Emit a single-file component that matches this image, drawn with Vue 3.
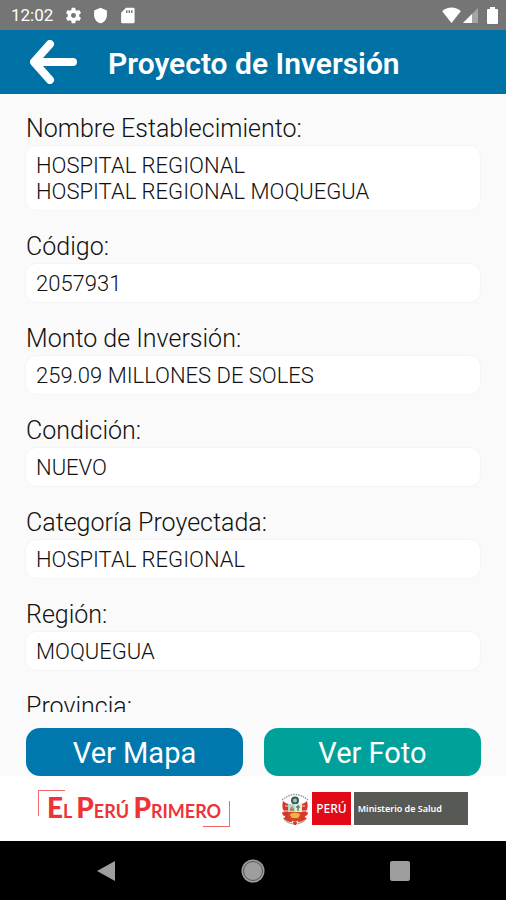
<template>
    <div class="screen">
        <div class="status-bar">
            <span class="clock">12:02</span>
            <svg class="status-icon" viewBox="0 0 24 24" aria-hidden="true">
                <path fill-rule="evenodd" d="M9.500 1h5l.6 3.200 1.900 1.100 3.100-1.100 2.500 4.300-2.500 2.200v2.600l2.500 2.200-2.500 4.300-3.100-1.100-1.900 1.100-.6 3.200h-5l-.6-3.200L7 18.700l-3.100 1.100-2.500-4.300 2.500-2.200v-2.600L1.400 8.500l2.500-4.300L7 5.300l1.900-1.100zM12 15.500a3.500 3.500 0 1 0 0-7 3.500 3.500 0 0 0 0 7z" />
            </svg>
            <svg class="status-icon" viewBox="0 0 24 24" aria-hidden="true">
                <path d="M12 1 3 5v6.500c0 5.500 3.800 10.300 9 11.500 5.200-1.200 9-6 9-11.500V5z" />
            </svg>
            <svg class="status-icon" viewBox="0 0 24 24" aria-hidden="true">
                <path fill-rule="evenodd" d="M20 1H10L3 8v13a2 2 0 0 0 2 2h15a2 2 0 0 0 2-2V3a2 2 0 0 0-2-2zM12 8.500h-2v-4h2zm3.500 0h-2v-4h2zm3.500 0h-2v-4h2z" />
            </svg>
            <div class="status-right">
                <svg class="wifi" viewBox="0 0 19 16" aria-hidden="true">
                    <path d="M9.500 16 .2 4.200C2.800 1.800 6 .5 9.500.5s6.700 1.300 9.300 3.700z" />
                </svg>
                <svg class="signal" viewBox="0 0 15 15" aria-hidden="true">
                    <path opacity=".35" d="M0 15 15 0v15z" />
                    <path d="M0 15 9 6v9z" />
                </svg>
                <svg class="battery" viewBox="0 0 11 17" aria-hidden="true">
                    <path d="M3 0h5v2h2a1 1 0 0 1 1 1v13a1 1 0 0 1-1 1H1a1 1 0 0 1-1-1V3a1 1 0 0 1 1-1h2z" />
                </svg>
            </div>
        </div>

        <header class="app-bar">
            <button class="back" type="button" aria-label="Atrás">
                <svg viewBox="0 0 48 44" aria-hidden="true">
                    <path d="M20 4 4 22l16 18M5 22h38" />
                </svg>
            </button>
            <h1>{{ title }}</h1>
        </header>

        <main class="fields">
            <div v-for="field in fields" :key="field.id" class="field">
                <label :for="field.id">{{ field.label }}</label>
                <textarea v-if="field.rows" :id="field.id" :rows="field.rows" :value="field.value" readonly></textarea>
                <input v-else :id="field.id" type="text" :value="field.value" readonly>
            </div>
        </main>

        <div class="actions">
            <button class="action map" type="button">Ver Mapa</button>
            <button class="action photo" type="button">Ver Foto</button>
        </div>

        <footer class="logos">
            <div class="slogan">
                <p><b>E</b>l <b>P</b>erú <b>P</b>rimero</p>
            </div>
            <div class="ministry">
                <svg class="crest" viewBox="0 0 28 34" aria-hidden="true">
                    <path d="M1 8Q14-3 27 8" fill="none" stroke="#999" stroke-width="1.500" stroke-dasharray="1.500 1" />
                    <path d="M2 9c3 3 6 3 9 3v18c-4 0-7-1-9-4 2 0 2-1 2-2-2 0-3-2-3-4 1 1 2 0 2-1-2-2-2-6-1-10z" fill="#d8372c" />
                    <path d="M26 9c-3 3-6 3-9 3v18c4 0 7-1 9-4-2 0-2-1-2-2 2 0 3-2 3-4-1 1-2 0-2-1 2-2 2-6 1-10z" fill="#d8372c" />
                    <path d="M4 14h4M3 19h4M24 14h-4M25 19h-4" stroke="#f3d5c8" stroke-width="1" />
                    <circle cx="14" cy="8.500" r="3" fill="#9fc4cf" stroke="#3c5a48" stroke-width="2" />
                    <path d="M7 12h14v8H7z" fill="#b9d8cf" />
                    <path d="M14 12h7v8h-7z" fill="#e4ebd6" />
                    <path d="M17 13v6M15 15h4" stroke="#4b9155" stroke-width="1.500" />
                    <path d="M9 17l2-3 2 3v2H9z" fill="#b98255" />
                    <path d="M7 20h14v3c0 4-3 6-7 7-4-1-7-3-7-7z" fill="#d2452f" />
                    <path d="M9 23c0-3 10-3 10 0l-2 3h-6z" fill="#edb63d" />
                    <path d="M4 28c5 5 15 5 20 0" fill="none" stroke="#b5b08a" stroke-width="1.500" />
                    <path d="M12 30h4l-1 3h-2z" fill="#c83a2e" />
                </svg>
                <span class="country">PERÚ</span>
                <span class="office">Ministerio de Salud</span>
            </div>
        </footer>

        <nav class="nav-bar">
            <button type="button" aria-label="Volver">
                <svg viewBox="0 0 24 24" aria-hidden="true"><path d="M3 12 21 2v20z" /></svg>
            </button>
            <button type="button" aria-label="Inicio">
                <svg viewBox="0 0 24 24" aria-hidden="true">
                    <circle cx="12" cy="12" r="11.500" />
                    <circle class="ring" cx="12" cy="12" r="9.500" />
                </svg>
            </button>
            <button type="button" aria-label="Recientes">
                <svg viewBox="0 0 24 24" aria-hidden="true"><rect x="2" y="2" width="20" height="20" rx="2" /></svg>
            </button>
        </nav>
    </div>
</template>

<script setup>
import { ref } from 'vue';

const title = 'Proyecto de Inversión';

const fields = ref([
    { id: 'nombre', label: 'Nombre Establecimiento:', value: 'HOSPITAL REGIONAL\nHOSPITAL REGIONAL MOQUEGUA', rows: 2 },
    { id: 'codigo', label: 'Código:', value: '2057931' },
    { id: 'monto', label: 'Monto de Inversión:', value: '259.09 MILLONES DE SOLES' },
    { id: 'condicion', label: 'Condición:', value: 'NUEVO' },
    { id: 'categoria', label: 'Categoría Proyectada:', value: 'HOSPITAL REGIONAL' },
    { id: 'region', label: 'Región:', value: 'MOQUEGUA' },
    { id: 'provincia', label: 'Provincia:', value: '' }
]);
</script>

<style>
body {
    margin: 0;
    background: #fafafa;
}
</style>

<style scoped>
.screen {
    display: flex;
    flex-direction: column;
    height: 100vh;
    background: #fafafa;
    color: #111;
    font-family: Roboto, "Liberation Sans", sans-serif;
}

button {
    border: 0;
    padding: 0;
    background: none;
    font-family: inherit;
    cursor: pointer;
}

.status-bar {
    flex: none;
    display: flex;
    align-items: center;
    gap: 10px;
    height: 30px;
    padding: 0 8px 0 11px;
    background: #757575;
    color: #fff;
}

.status-bar svg {
    fill: currentColor;
}

.clock {
    margin-right: 2px;
    font-size: 17px;
    font-weight: 400;
}

.status-icon {
    width: 17px;
    height: 17px;
}

.status-right {
    display: flex;
    align-items: center;
    gap: 2px;
    margin-left: auto;
}

.wifi {
    width: 19px;
    height: 16px;
}

.signal {
    width: 15px;
    height: 15px;
}

.battery {
    width: 11px;
    height: 17px;
    margin-left: 7px;
}

.app-bar {
    flex: none;
    display: flex;
    align-items: center;
    gap: 30px;
    height: 64px;
    padding: 0 30px;
    background: #0071a4;
    color: #fff;
}

.back {
    display: flex;
}

.back svg {
    width: 48px;
    height: 44px;
    fill: none;
    stroke: #fff;
    stroke-width: 8;
    stroke-linecap: round;
    stroke-linejoin: round;
}

h1 {
    margin: 0;
    padding-top: 4px;
    font-size: 30px;
    font-weight: 600;
    line-height: 36px;
}

.fields {
    flex: 1;
    min-height: 0;
    display: flex;
    flex-direction: column;
    gap: 22px;
    padding: 20px 26px 0;
    overflow-y: auto;
    scrollbar-width: none;
}

.field {
    flex: none;
    display: flex;
    flex-direction: column;
    gap: 2px;
}

.field label {
    font-size: 25px;
    font-weight: 300;
    line-height: 30px;
}

.field input,
.field textarea {
    box-sizing: content-box;
    border: 0;
    border-radius: 10px;
    padding: 7px 10px 5px;
    background: #fff;
    box-shadow: 0 0 2px #e8e8e8;
    color: inherit;
    font-family: inherit;
    font-size: 22px;
    font-weight: 300;
    line-height: 26px;
    outline: none;
    resize: none;
    overflow: hidden;
}

.field input {
    height: 26px;
}

.actions {
    flex: none;
    display: flex;
    gap: 21px;
    padding: 16px 25px 0 26px;
}

.action {
    flex: 1;
    height: 48px;
    border-radius: 14px;
    padding-top: 2px;
    color: #fff;
    font-size: 29px;
    line-height: 36px;
}

.map {
    background: #0078ae;
}

.photo {
    background: #00a19a;
}

.logos {
    flex: none;
    display: flex;
    align-items: center;
    justify-content: space-between;
    height: 65px;
    padding: 0 38px;
    background: #fff;
}

.slogan {
    position: relative;
    padding: 5px 9px 0;
}

.slogan::before,
.slogan::after {
    content: "";
    position: absolute;
    width: 26px;
    height: 25px;
    border: 0 solid #ef6a6c;
}

.slogan::before {
    top: 0;
    left: 0;
    border-width: 1px 0 0 1px;
}

.slogan::after {
    right: 0;
    bottom: 0;
    border-width: 0 1px 1px 0;
}

.slogan p {
    margin: 0;
    color: #ee3338;
    font-family: Lato, sans-serif;
    font-size: 18px;
    font-weight: 700;
    line-height: 32px;
    text-transform: uppercase;
    white-space: nowrap;
}

.slogan b {
    font-size: 28px;
    font-weight: 900;
    line-height: 24px;
}

.ministry {
    display: flex;
    align-items: center;
    gap: 3px;
    color: #fff;
    font-family: "Noto Sans", "Open Sans", sans-serif;
    white-space: nowrap;
}

.crest {
    width: 28px;
    height: 34px;
}

.country {
    padding: 0 4px;
    background: #e20a17;
    font-size: 12px;
    font-weight: 500;
    line-height: 33px;
}

.office {
    padding: 0 26px 0 4px;
    background: #575955;
    font-size: 9px;
    font-weight: 600;
    line-height: 33px;
}

.nav-bar {
    flex: none;
    display: flex;
    justify-content: space-between;
    height: 59px;
    padding: 0 94px;
    background: #000;
}

.nav-bar button {
    display: flex;
    align-items: center;
}

.nav-bar svg {
    width: 24px;
    height: 24px;
    fill: #9e9e9e;
}

.nav-bar .ring {
    fill: none;
    stroke: #555;
    stroke-width: 1;
}
</style>
